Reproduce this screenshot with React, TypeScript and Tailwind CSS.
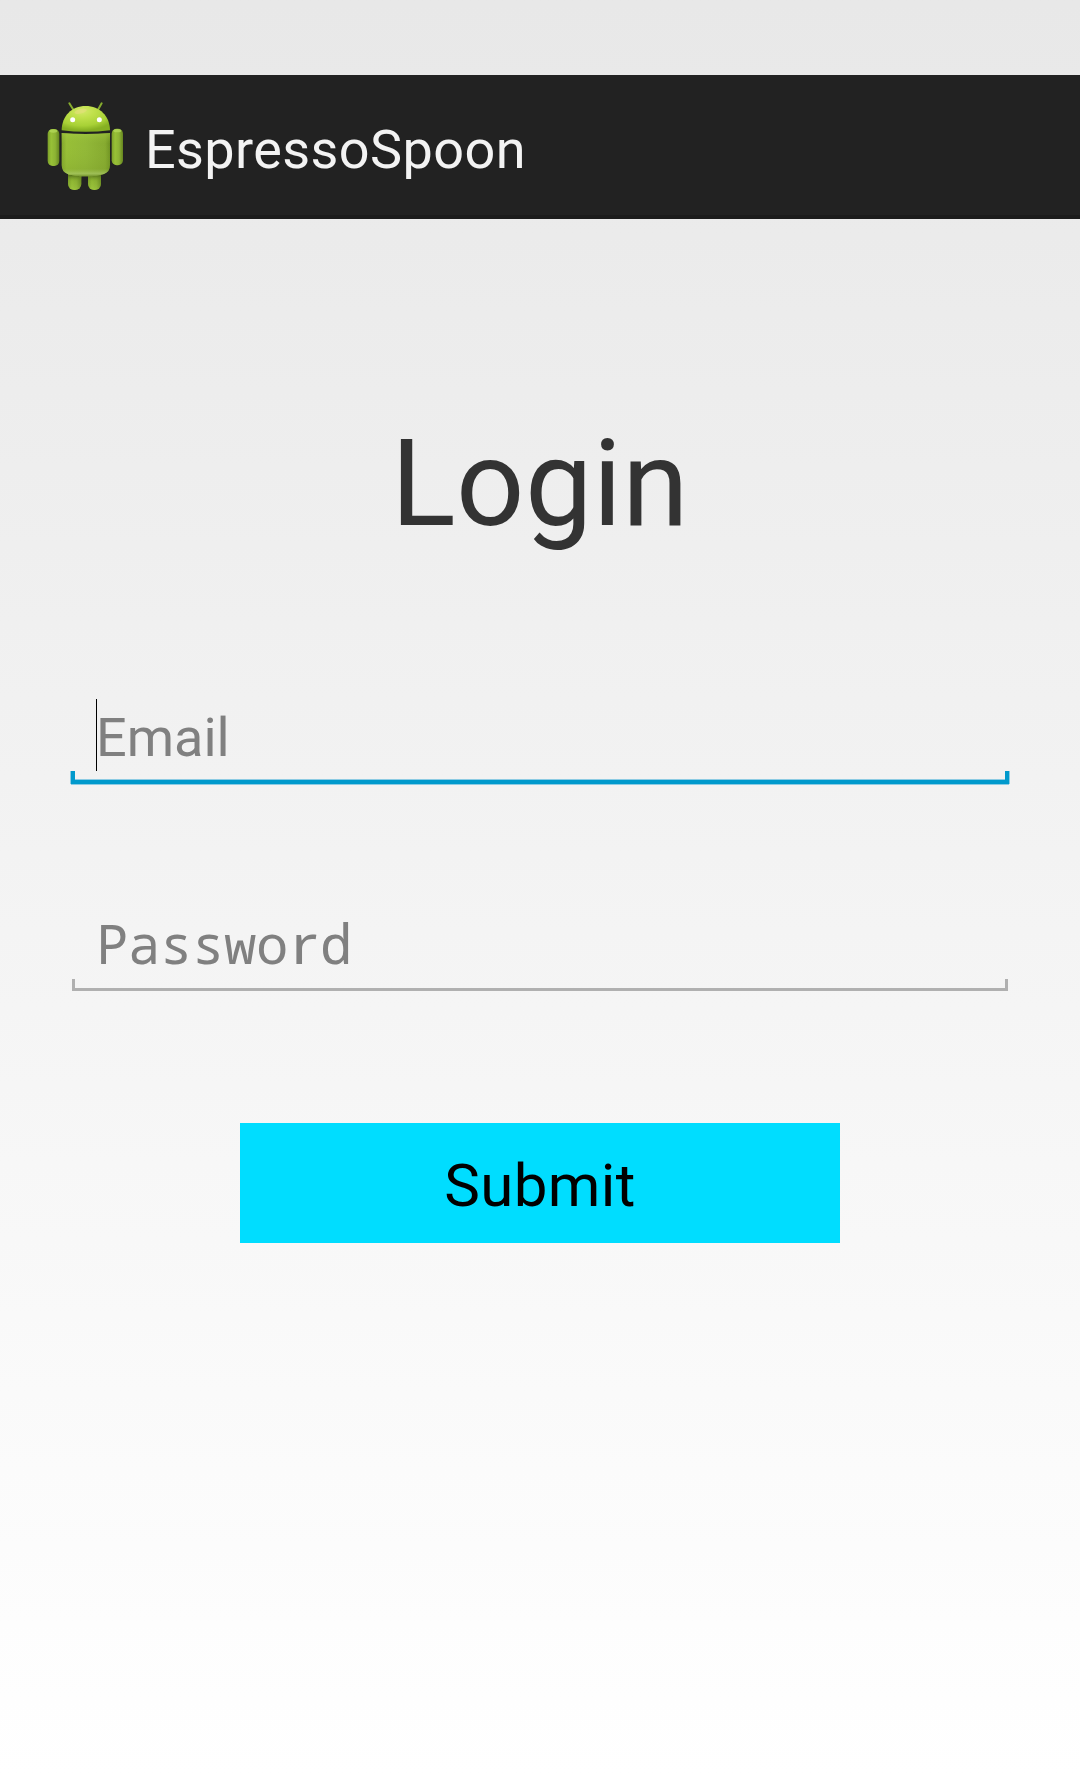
import React from "react";

function AndroidIcon() {
  return (
    <svg viewBox="21 117 288 288" className="mt-1 h-24 w-24 shrink-0" aria-label="Android">
      <defs>
        <linearGradient id="torso" x1="0" x2="1" y1="0" y2="0">
          <stop offset="0" stopColor="#82a62c" />
          <stop offset="0.1" stopColor="#98bf37" />
          <stop offset="0.5" stopColor="#92b838" />
          <stop offset="0.9" stopColor="#86aa30" />
          <stop offset="1" stopColor="#6f9222" />
        </linearGradient>
        <linearGradient id="shade" x1="0" x2="0" y1="0" y2="1">
          <stop offset="0" stopColor="#a8cf42" stopOpacity="0.5" />
          <stop offset="0.25" stopColor="#96bd38" stopOpacity="0" />
          <stop offset="0.82" stopColor="#7fa12c" stopOpacity="0.3" />
          <stop offset="0.93" stopColor="#a9c76b" stopOpacity="0.6" />
          <stop offset="1" stopColor="#6f9028" />
        </linearGradient>
        <radialGradient id="head" cx="0.42" cy="0.2" r="0.75">
          <stop offset="0" stopColor="#d3e968" />
          <stop offset="0.35" stopColor="#bfe04a" />
          <stop offset="0.75" stopColor="#a8d136" />
          <stop offset="1" stopColor="#86b022" />
        </radialGradient>
        <linearGradient id="limb" x1="0" x2="1" y1="0" y2="0">
          <stop offset="0" stopColor="#7b9f28" />
          <stop offset="0.3" stopColor="#98c137" />
          <stop offset="0.65" stopColor="#8db334" />
          <stop offset="1" stopColor="#65851f" />
        </linearGradient>
        <linearGradient id="leg" x1="0" x2="0" y1="0" y2="1">
          <stop offset="0" stopColor="#55721a" />
          <stop offset="0.4" stopColor="#7fa42c" stopOpacity="0.3" />
          <stop offset="1" stopColor="#a7cf48" stopOpacity="0.35" />
        </linearGradient>
      </defs>
      <g stroke="#86ac2e" strokeWidth="6" strokeLinecap="round">
        <path d="M118 130 L130 149" />
        <path d="M215 130 L204 149" />
      </g>
      <path d="M114 330h40v42a18 18 0 0 1-18 18h-4a18 18 0 0 1-18-18z" fill="url(#limb)" />
      <path d="M174 330h39v42a18 18 0 0 1-18 18h-3a18 18 0 0 1-18-18z" fill="url(#limb)" />
      <path d="M114 345h40v27a18 18 0 0 1-18 18h-4a18 18 0 0 1-18-18z" fill="url(#leg)" />
      <path d="M174 345h39v27a18 18 0 0 1-18 18h-3a18 18 0 0 1-18-18z" fill="url(#leg)" />
      <rect x="53" y="207" width="35" height="111" rx="15" fill="url(#limb)" />
      <rect x="245" y="206" width="34" height="110" rx="15" fill="url(#limb)" />
      <ellipse cx="70" cy="213" rx="12" ry="5" fill="#b7dc5c" opacity="0.7" />
      <ellipse cx="262" cy="212" rx="12" ry="5" fill="#b7dc5c" opacity="0.7" />
      <path d="M95 219q72 6 145 0v96q0 20-18 27q-20 7-54 7t-55-7q-18-7-18-27z" fill="url(#torso)" />
      <path d="M95 219q72 6 145 0v96q0 20-18 27q-20 7-54 7t-55-7q-18-7-18-27z" fill="url(#shade)" />
      <path d="M95 211c0-42 30-73 72-73s73 31 73 73q-73 9-145 0z" fill="url(#head)" />
      <ellipse cx="152" cy="154" rx="19" ry="7" fill="#e8dc80" opacity="0.55" transform="rotate(-14 152 154)" />
      <circle cx="128" cy="179" r="7.5" fill="#fff" />
      <circle cx="208" cy="179" r="7.5" fill="#fff" />
    </svg>
  );
}

function ActionBar() {
  return (
    <header className="mt-[75px] flex h-36 items-center border-b-4 border-[#1c1c1c] bg-[#222222] pl-[37px]">
      <AndroidIcon />
      <h1 className="mt-[9px] ml-3 font-['Roboto',sans-serif] text-[54px] leading-none tracking-[0.4px] text-[#f3f3f3]">
        EspressoSpoon
      </h1>
    </header>
  );
}

function PasswordHint() {
  return (
    <span className="font-['Noto_Sans_Mono','Noto_Sans',monospace] text-[54px] leading-[72px] tracking-[-0.4px] text-[#808080]">
      Passwo
      <span className="inline-block w-8 origin-center scale-x-[1.18] text-center font-['Noto_Sans',sans-serif] leading-none">
        r
      </span>
      d
    </span>
  );
}

export default function App() {
  return (
    <div className="flex h-[1776px] w-[1080px] flex-col overflow-hidden bg-linear-to-b from-[#e8e8e8] to-white">
      <ActionBar />
      <main className="flex flex-col items-center">
        <h2 className="mt-[175px] h-[185px] font-['Roboto',sans-serif] text-[120px] leading-[180px] tracking-[0.4px] text-[#333333]">
          Login
        </h2>
        <div className="mt-[120px] flex w-[938px] flex-col">
          <div className="ml-[25px] flex h-[72px] border-l border-black font-['Roboto',sans-serif] text-[54px] leading-[77px] text-[#808080]">
            <span className="-ml-px">Email</span>
          </div>
          <div className="h-[13px] border-x-4 border-b-4 border-[#0099cc] shadow-[0_1px_0_#8ccbe3,-1px_0_0_#8ccbe3,1px_0_0_#8ccbe3,inset_0_-1px_0_#8ccbe3]" />
        </div>
        <div className="mt-[123px] flex w-[936px] flex-col">
          <div className="ml-6 h-[72px] whitespace-nowrap">
            <PasswordHint />
          </div>
          <div className="h-3 border-x-[3px] border-b-[3px] border-[#b0b0b0]" />
        </div>
        <button className="mt-[132px] h-[120px] w-[600px] bg-[#00ddff] pt-[5px] font-['Roboto',sans-serif] text-[60px] leading-none tracking-[0.4px] text-black">
          Submit
        </button>
      </main>
    </div>
  );
}
